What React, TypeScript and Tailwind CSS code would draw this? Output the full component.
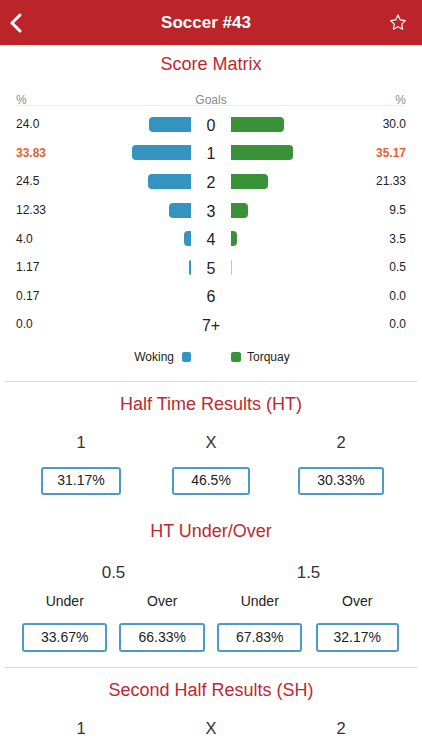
import React from 'react';

// Score matrix rows: goals, home %, away %
const rows = [
  { goals: '0', home: '24.0', away: '30.0' },
  { goals: '1', home: '33.83', away: '35.17', top: true },
  { goals: '2', home: '24.5', away: '21.33' },
  { goals: '3', home: '12.33', away: '9.5' },
  { goals: '4', home: '4.0', away: '3.5' },
  { goals: '5', home: '1.17', away: '0.5' },
  { goals: '6', home: '0.17', away: '0.0' },
  { goals: '7+', home: '0.0', away: '0.0' },
];

const PX_PER_PCT = 1.75;

// bars below half a percent are not drawn, tiny ones fade out
const barWidth = (pct: string) => {
  const v = parseFloat(pct);
  return v < 0.5 ? 0 : Math.max(1, v * PX_PER_PCT);
};

const SectionTitle: React.FC<{ children: React.ReactNode; className?: string }> = ({ children, className }) => (
  <div className={`flex items-center justify-center text-[18px] text-[#c0282e] ${className ?? ''}`}>
    {children}
  </div>
);

const ValueBox: React.FC<{ value: string; width: string }> = ({ value, width }) => (
  <div
    className={`${width} flex items-center justify-center rounded-[3px] border-2 border-[#4b9bc6] text-[14px] text-[#222]`}
  >
    {value}
  </div>
);

export default function App() {
  return (
    <div className="w-[422px] min-h-[750px] bg-white font-['Liberation_Sans',Arial,sans-serif] text-[#222] overflow-hidden">
      {/* Top bar */}
      <div className="h-[45px] bg-[#bb2529] flex items-center justify-between px-[8px]">
        <svg width="14" height="20" viewBox="0 0 14 20" className="ml-[1px]">
          <path d="M11 2 L3 10 L11 18" fill="none" stroke="#fff" strokeWidth="3" strokeLinecap="round" strokeLinejoin="round" />
        </svg>
        <div className="text-white font-bold text-[17px]">Soccer #43</div>
        <svg width="18" height="17" viewBox="0 0 24 23" className="mr-[7px]">
          <path
            d="M12 1.5 L15.1 8 L22 8.9 L17 13.7 L18.2 20.6 L12 17.3 L5.8 20.6 L7 13.7 L2 8.9 L8.9 8 Z"
            fill="none"
            stroke="#fff"
            strokeWidth="1.6"
            strokeLinejoin="round"
          />
        </svg>
      </div>

      {/* Score Matrix */}
      <SectionTitle className="h-[38px]">Score Matrix</SectionTitle>
      <div className="px-[16px]">
        <div className="h-[23px] pt-[8px] grid grid-cols-[1fr_40px_1fr] items-center border-b border-[#ececec] text-[12px] text-[#8a8a8a]">
          <div>%</div>
          <div className="text-center">Goals</div>
          <div className="text-right">%</div>
        </div>
        <div className="pt-[4px]">
          {rows.map((r) => {
            const hw = barWidth(r.home);
            const aw = barWidth(r.away);
            return (
              <div key={r.goals} className="h-[28.6px] grid grid-cols-[1fr_40px_1fr] items-center">
                <div className="flex items-center justify-between">
                  <span className={r.top ? 'text-[12px] font-bold text-[#e8622a]' : 'text-[12px]'}>{r.home}</span>
                  <div
                    className={`h-[15px] bg-[#3593bf] rounded-l-[4px] ${hw < 1.5 ? 'opacity-40' : ''}`}
                    style={{ width: hw }}
                  />
                </div>
                <div className="text-center text-[16px] text-[#222] pt-[3px]">{r.goals}</div>
                <div className="flex items-center justify-between">
                  <div
                    className={`h-[15px] bg-[#3a9238] rounded-r-[4px] ${aw < 1.5 ? 'opacity-40' : ''}`}
                    style={{ width: aw }}
                  />
                  <span className={r.top ? 'text-[12px] font-bold text-[#e8622a]' : 'text-[12px]'}>{r.away}</span>
                </div>
              </div>
            );
          })}
        </div>
        <div className="h-[36px] grid grid-cols-[1fr_40px_1fr] items-center text-[12px]">
          <div className="flex items-center justify-end gap-[8px]">
            <span>Woking</span>
            <span className="w-[9px] h-[10px] rounded-[2px] bg-[#3593bf]" />
          </div>
          <div />
          <div className="flex items-center gap-[6px]">
            <span className="w-[10px] h-[10px] rounded-[2px] bg-[#3a9238]" />
            <span>Torquay</span>
          </div>
        </div>
      </div>

      {/* Half Time Results */}
      <div className="mt-[6px] mx-[5px] h-px bg-[#d9d9d9]" />
      <SectionTitle className="h-[46px]">Half Time Results (HT)</SectionTitle>
      <div className="px-[16px]">
        <div className="grid grid-cols-3 h-[30px] items-center text-center text-[16.5px] text-[#333]">
          <div>1</div>
          <div>X</div>
          <div>2</div>
        </div>
        <div className="grid grid-cols-3 mt-[9px] justify-items-center">
          <ValueBox value="31.17%" width="w-[80px] h-[28px]" />
          <ValueBox value="46.5%" width="w-[78px] h-[28px]" />
          <ValueBox value="30.33%" width="w-[86px] h-[28px]" />
        </div>
      </div>

      {/* HT Under/Over */}
      <SectionTitle className="h-[56px] mt-[9px]">HT Under/Over</SectionTitle>
      <div className="px-[16px]">
        <div className="grid grid-cols-2 h-[24px] items-center text-center text-[17px] text-[#333]">
          <div>0.5</div>
          <div>1.5</div>
        </div>
        <div className="grid grid-cols-4 h-[30px] mt-[3px] items-center text-center text-[14px] text-[#222]">
          <div>Under</div>
          <div>Over</div>
          <div>Under</div>
          <div>Over</div>
        </div>
        <div className="grid grid-cols-4 mt-[6px] justify-items-center">
          <ValueBox value="33.67%" width="w-[85px] h-[29px]" />
          <ValueBox value="66.33%" width="w-[86px] h-[29px]" />
          <ValueBox value="67.83%" width="w-[85px] h-[29px]" />
          <ValueBox value="32.17%" width="w-[83px] h-[29px]" />
        </div>
      </div>

      {/* Second Half Results */}
      <div className="mt-[15px] mx-[5px] h-px bg-[#d9d9d9]" />
      <SectionTitle className="h-[46px]">Second Half Results (SH)</SectionTitle>
      <div className="px-[16px]">
        <div className="grid grid-cols-3 h-[30px] items-center text-center text-[16.5px] text-[#333]">
          <div>1</div>
          <div>X</div>
          <div>2</div>
        </div>
      </div>
    </div>
  );
}
